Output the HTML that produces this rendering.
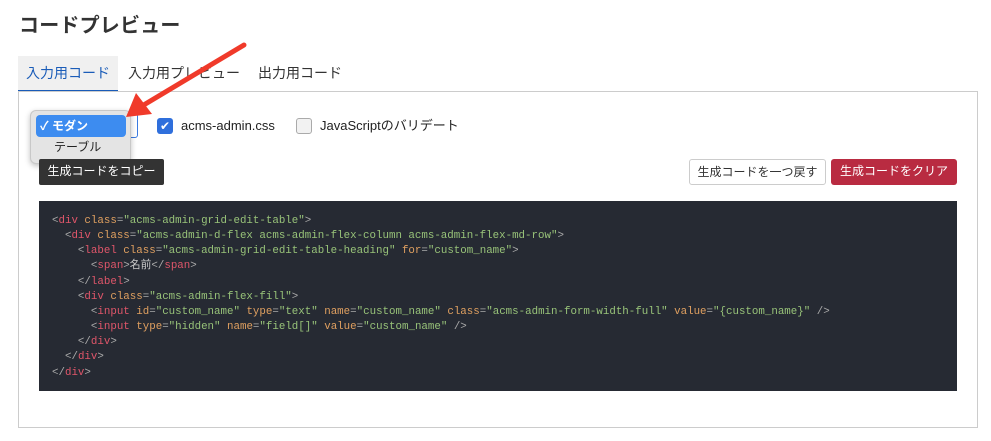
<!DOCTYPE html>
<html><head><meta charset="utf-8"><style>
*{box-sizing:border-box;margin:0;padding:0}
body{width:991px;height:441px;background:#fff;font-family:"Liberation Sans","Noto Sans CJK JP",sans-serif;color:#333;position:relative;overflow:hidden}
.a{position:absolute}
h1{position:absolute;left:19px;top:9px;font-size:20px;font-weight:bold;color:#333;letter-spacing:0.2px}
.tab{position:absolute;top:56px;height:36px;font-size:14px;line-height:34px;color:#333}
.panel{position:absolute;left:18px;top:91px;width:960px;height:337px;border:1px solid #ccc}
.btn{position:absolute;font-size:12px;text-align:center;line-height:24px;border-radius:3px}
pre{position:absolute;left:39px;top:201px;width:918px;height:190px;background:#262a33;font-family:"Liberation Mono","Noto Sans CJK JP",monospace;font-size:10.8px;line-height:15.15px;padding:13px 0 0 13px;color:#bbb}
.t{color:#e0566a}.k{color:#e0a060}.s{color:#98c379}.p{color:#aaa}
</style></head><body>
<h1>コードプレビュー</h1>
<div class="tab" style="left:18px;width:100px;background:#f0f0f0;border-bottom:2px solid #1a5cb8;color:#1a5cb8;text-align:center">入力用コード</div>
<div class="tab" style="left:128px">入力用プレビュー</div>
<div class="tab" style="left:258px">出力用コード</div>
<div class="panel"></div>
<div class="a" style="left:60px;top:112px;width:78px;height:26px;border:1px solid #3a7ae0;border-radius:3px;background:#fff"></div>
<div class="a" style="left:30px;top:110px;width:101px;height:54px;background:#e4e4e4;border:1px solid #c8c8c8;border-radius:6px;box-shadow:0 2px 6px rgba(0,0,0,.25)"></div>
<div class="a" style="left:36px;top:115px;width:90px;height:22px;background:#3d8cf0;border-radius:4px;color:#fff;font-size:12px;line-height:22px;padding-left:4px;font-weight:bold">✓ モダン</div>
<div class="a" style="left:54px;top:139px;font-size:12px;line-height:16px;color:#222">テーブル</div>
<div class="a" style="left:157px;top:118px;width:16px;height:16px;background:#2f6fdc;border-radius:3px;color:#fff;font-size:12px;line-height:16px;text-align:center">✔</div>
<div class="a" style="left:181px;top:117px;font-size:13px;line-height:18px;color:#222">acms-admin.css</div>
<div class="a" style="left:296px;top:118px;width:16px;height:16px;background:#f2f2f2;border:1px solid #aaa;border-radius:3px"></div>
<div class="a" style="left:320px;top:117px;font-size:13px;line-height:18px;color:#222">JavaScriptのバリデート</div>
<div class="btn" style="left:39px;top:159px;width:125px;height:26px;background:#333;color:#fff;border-radius:2px">生成コードをコピー</div>
<div class="btn" style="left:689px;top:159px;width:137px;height:26px;border:1px solid #ccc;color:#333;background:#fff">生成コードを一つ戻す</div>
<div class="btn" style="left:831px;top:159px;width:126px;height:26px;background:#b92b41;color:#fff">生成コードをクリア</div>
<pre><span class="p">&lt;</span><span class="t">div</span> <span class="k">class</span><span class="p">=</span><span class="s">"acms-admin-grid-edit-table"</span><span class="p">&gt;</span>
  <span class="p">&lt;</span><span class="t">div</span> <span class="k">class</span><span class="p">=</span><span class="s">"acms-admin-d-flex acms-admin-flex-column acms-admin-flex-md-row"</span><span class="p">&gt;</span>
    <span class="p">&lt;</span><span class="t">label</span> <span class="k">class</span><span class="p">=</span><span class="s">"acms-admin-grid-edit-table-heading"</span> <span class="k">for</span><span class="p">=</span><span class="s">"custom_name"</span><span class="p">&gt;</span>
      <span class="p">&lt;</span><span class="t">span</span><span class="p">&gt;</span><span style="color:#ccc">名前</span><span class="p">&lt;/</span><span class="t">span</span><span class="p">&gt;</span>
    <span class="p">&lt;/</span><span class="t">label</span><span class="p">&gt;</span>
    <span class="p">&lt;</span><span class="t">div</span> <span class="k">class</span><span class="p">=</span><span class="s">"acms-admin-flex-fill"</span><span class="p">&gt;</span>
      <span class="p">&lt;</span><span class="t">input</span> <span class="k">id</span><span class="p">=</span><span class="s">"custom_name"</span> <span class="k">type</span><span class="p">=</span><span class="s">"text"</span> <span class="k">name</span><span class="p">=</span><span class="s">"custom_name"</span> <span class="k">class</span><span class="p">=</span><span class="s">"acms-admin-form-width-full"</span> <span class="k">value</span><span class="p">=</span><span class="s">"{custom_name}"</span> <span class="p">/&gt;</span>
      <span class="p">&lt;</span><span class="t">input</span> <span class="k">type</span><span class="p">=</span><span class="s">"hidden"</span> <span class="k">name</span><span class="p">=</span><span class="s">"field[]"</span> <span class="k">value</span><span class="p">=</span><span class="s">"custom_name"</span> <span class="p">/&gt;</span>
    <span class="p">&lt;/</span><span class="t">div</span><span class="p">&gt;</span>
  <span class="p">&lt;/</span><span class="t">div</span><span class="p">&gt;</span>
<span class="p">&lt;/</span><span class="t">div</span><span class="p">&gt;</span></pre>
<svg class="a" style="left:0;top:0" width="991" height="441">
<line x1="244" y1="45" x2="142" y2="106" stroke="#f03a2a" stroke-width="5" stroke-linecap="round"/>
<polygon points="126,117 136,93 152,114" fill="#f03a2a"/>
</svg>
</body></html>
